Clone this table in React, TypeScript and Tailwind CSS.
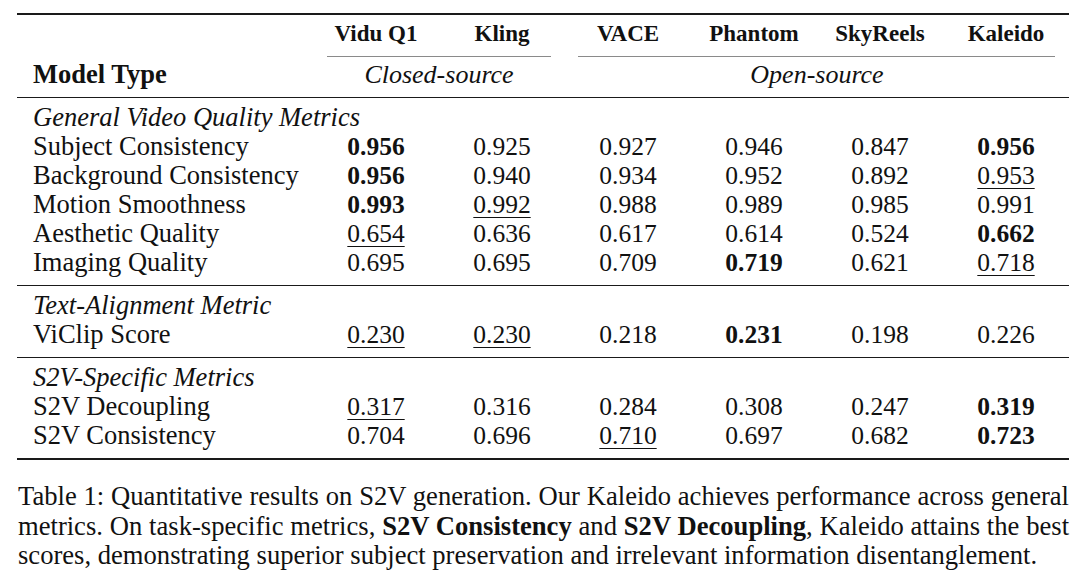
const headers = ['Vidu Q1', 'Kling', 'VACE', 'Phantom', 'SkyReels', 'Kaleido'];

type Row = { label: string; cells: string[] };
type Section = { title: string; rows: Row[] };

// "b:" = bold (best), "u:" = underlined (second best)
const sections: Section[] = [
  {
    title: 'General Video Quality Metrics',
    rows: [
      { label: 'Subject Consistency', cells: ['b:0.956', '0.925', '0.927', '0.946', '0.847', 'b:0.956'] },
      { label: 'Background Consistency', cells: ['b:0.956', '0.940', '0.934', '0.952', '0.892', 'u:0.953'] },
      { label: 'Motion Smoothness', cells: ['b:0.993', 'u:0.992', '0.988', '0.989', '0.985', '0.991'] },
      { label: 'Aesthetic Quality', cells: ['u:0.654', '0.636', '0.617', '0.614', '0.524', 'b:0.662'] },
      { label: 'Imaging Quality', cells: ['0.695', '0.695', '0.709', 'b:0.719', '0.621', 'u:0.718'] },
    ],
  },
  {
    title: 'Text-Alignment Metric',
    rows: [{ label: 'ViClip Score', cells: ['u:0.230', 'u:0.230', '0.218', 'b:0.231', '0.198', '0.226'] }],
  },
  {
    title: 'S2V-Specific Metrics',
    rows: [
      { label: 'S2V Decoupling', cells: ['u:0.317', '0.316', '0.284', '0.308', '0.247', 'b:0.319'] },
      { label: 'S2V Consistency', cells: ['0.704', '0.696', 'u:0.710', '0.697', '0.682', 'b:0.723'] },
    ],
  },
];

function Cell({ value }: { value: string }) {
  if (value.startsWith('b:')) {
    return <span className="font-bold">{value.slice(2)}</span>;
  }
  if (value.startsWith('u:')) {
    return <span className="underline decoration-1 underline-offset-[4px]">{value.slice(2)}</span>;
  }
  return <span>{value}</span>;
}

export default function App() {
  return (
    <div
      className="w-[1080px] h-[575px] bg-white text-[#111] overflow-hidden"
      style={{ fontFamily: '"Liberation Serif", "Times New Roman", serif' }}
    >
      <div className="ml-[17px] w-[1052px] pt-[13px]">
        {/* toprule */}
        <div className="h-[2px] bg-[#1a1a1a]" />

        {/* header */}
        <div className="grid grid-cols-[296px_repeat(6,126px)] mt-[4px]">
          <div />
          {headers.map((h) => (
            <div key={h} className="h-[29px] leading-[29px] text-center text-[23px] font-bold">
              {h}
            </div>
          ))}
          <div />
          <div className="col-span-2 mx-[14px] mt-[8px] h-px bg-[#8a8a8a]" />
          <div className="col-span-4 ml-[13px] mr-[14px] mt-[8px] h-px bg-[#8a8a8a]" />
          <div className="mt-[3px] h-[29px] leading-[29px] pl-[16px] text-[26.5px] font-bold whitespace-nowrap">
            Model Type
          </div>
          <div className="col-span-2 mt-[3px] h-[29px] leading-[29px] text-center text-[26px] italic">
            Closed-source
          </div>
          <div className="col-span-4 mt-[3px] h-[29px] leading-[29px] text-center text-[26px] italic">
            Open-source
          </div>
        </div>

        {sections.map((s) => (
          <div key={s.title}>
            <div className="mt-[8px] h-px bg-[#1a1a1a]" />
            <div className="pt-[5px]">
              <div className="h-[29px] leading-[29px] pl-[16px] text-[26.5px] italic whitespace-nowrap">{s.title}</div>
              {s.rows.map((r) => (
                <div key={r.label} className="grid grid-cols-[296px_repeat(6,126px)] h-[29px] leading-[29px]">
                  <div className="pl-[16px] text-[26.5px] whitespace-nowrap">{r.label}</div>
                  {r.cells.map((c, j) => (
                    <div key={j} className="text-center text-[25.5px]">
                      <Cell value={c} />
                    </div>
                  ))}
                </div>
              ))}
            </div>
          </div>
        ))}

        {/* bottomrule */}
        <div className="mt-[8px] h-[2px] bg-[#1a1a1a]" />

        {/* caption */}
        <div className="mt-[22px] pl-[1px] text-[26.6px] leading-[29.5px]">
          <div className="text-justify [text-align-last:justify] whitespace-nowrap">
            Table 1: Quantitative results on S2V generation. Our Kaleido achieves performance across general
          </div>
          <div className="text-justify [text-align-last:justify] whitespace-nowrap">
            metrics. On task-specific metrics, <span className="font-bold">S2V Consistency</span> and{' '}
            <span className="font-bold">S2V Decoupling</span>, Kaleido attains the best
          </div>
          <div className="whitespace-nowrap">
            scores, demonstrating superior subject preservation and irrelevant information disentanglement.
          </div>
        </div>
      </div>
    </div>
  );
}
